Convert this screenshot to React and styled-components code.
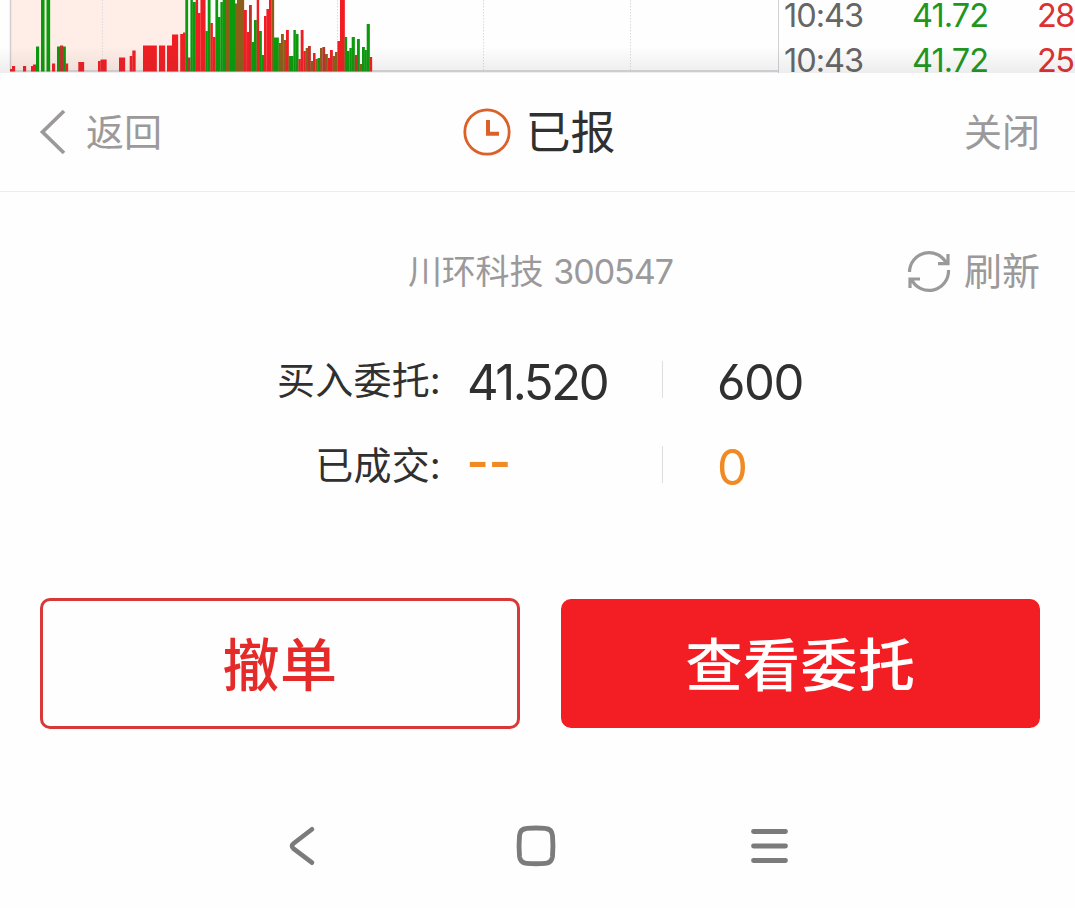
import React from "react";
import styled, { createGlobalStyle } from "styled-components";

const Global = createGlobalStyle`
  * { box-sizing: border-box; }
  body { margin: 0; background: #fefefe; }
`;

const Page = styled.main`
  width: 1075px;
  height: 908px;
  overflow: hidden;
  display: flex;
  flex-direction: column;
  background: #fefefe;
  color: #303030;
  font-family: "Inter", "Noto Sans CJK SC", sans-serif;
  font-weight: 400;
`;

const Market = styled.section`
  height: 73px;
  display: flex;
  position: relative;
  flex: none;
  &::after {
    content: "";
    position: absolute;
    inset: 47px 0 0 0;
    background: linear-gradient(rgba(70, 60, 75, 0), rgba(70, 60, 75, 0.09));
  }
`;

const Chart = styled.svg`
  display: block;
  flex: none;
`;

const Trades = styled.div`
  flex: 1;
  padding-left: 5px;
  display: grid;
  grid-template-rows: 32px 28px;
  row-gap: 15px;
`;

const Trade = styled.div`
  display: grid;
  grid-template-columns: 128px 125px 38px;
  align-items: center;
  font-size: 32.5px;
  line-height: 26px;
  white-space: nowrap;
`;

const Cell = styled.span`
  color: ${(p) => p.$color};
  letter-spacing: ${(p) => p.$spacing || 0}px;
`;

const Header = styled.header`
  height: 119px;
  flex: none;
  padding: 0 35px 0 39px;
  border-bottom: 1px solid #ececec;
  display: grid;
  grid-template-columns: 1fr auto 1fr;
  align-items: center;
`;

const Action = styled.button`
  border: 0;
  background: none;
  padding: 0;
  display: flex;
  align-items: center;
  gap: ${(p) => p.$gap || 0}px;
  justify-self: ${(p) => p.$side};
  font: 400 38px/50px "Noto Sans CJK SC", sans-serif;
  color: #9b999a;
`;

const Caption = styled.span`
  padding-bottom: 4px;
`;

const Title = styled.h1`
  margin: 0;
  display: flex;
  align-items: center;
  gap: 14px;
  font: 400 45px/60px "Noto Sans CJK SC", sans-serif;
`;

const StockRow = styled.div`
  height: 56px;
  margin-top: 51px;
  padding-right: 35px;
  display: grid;
  grid-template-columns: 408px 1fr auto;
  align-items: center;
  flex: none;
`;

const Stock = styled.div`
  grid-column: 2;
  display: flex;
  align-items: center;
  gap: 10px;
  font-size: 34px;
  line-height: 50px;
  color: #9b999a;
`;

const StockName = styled.span`
  padding-top: 2px;
  letter-spacing: -0.2px;
`;

const Code = styled.span`
  padding-top: 2px;
  letter-spacing: -1px;
`;

const Orders = styled.section`
  margin-top: 38px;
  flex: none;
`;

const Order = styled.div`
  height: 85px;
  display: grid;
  grid-template-columns: 441px 221px 55px 200px;
  align-items: center;
`;

const Label = styled.span`
  justify-self: end;
  font-size: 38px;
  line-height: 50px;
  letter-spacing: 0.2px;
`;

const Value = styled.span`
  font-size: 49px;
  line-height: 60px;
  padding-top: 7px;
  padding-left: ${(p) => p.$left || 0}px;
  color: ${(p) => (p.$accent ? "#ef8a24" : "#303030")};
  letter-spacing: ${(p) => p.$spacing || 0}px;
  font-feature-settings: "cv03";
`;

const Rule = styled.i`
  width: 1px;
  height: 37px;
  background: #dedede;
`;

const Dashes = styled(Value)`
  font-family: "Liberation Sans", sans-serif;
  font-size: 64px;
  padding: 0 0 9px 26px;
  letter-spacing: 1px;
`;

const Buttons = styled.div`
  display: grid;
  grid-template-columns: 480px 479px;
  gap: 41px;
  padding-left: 40px;
  margin-top: 91px;
  height: 131px;
  align-items: center;
  flex: none;
`;

const Button = styled.button`
  height: ${(p) => (p.$filled ? 129 : 131)}px;
  padding: 0 0 6px;
  border-radius: 10px;
  font: 500 57px/80px "Noto Sans CJK SC", sans-serif;
  letter-spacing: 0.5px;
  border: 3px solid ${(p) => (p.$filled ? "#f31e23" : "#d93838")};
  background: ${(p) => (p.$filled ? "#f31e23" : "#fefefe")};
  color: ${(p) => (p.$filled ? "#fff" : "#e52a2a")};
`;

const NavBar = styled.nav`
  display: flex;
  justify-content: space-between;
  align-items: center;
  height: 44px;
  width: 501px;
  margin: 95px 0 0 288px;
  flex: none;
`;

const R = "#f01e23";
const G = "#0a9a0b";
const B = "#8c5f18";
const D = "#bd3328";

// [left, right, top, colour]; every bar stands on the volume axis.
const bars = [
  [10, 12, 69, R], [12, 15, 66, R], [23, 26, 66, R], [31, 33, 66, R], [33, 36, 64.5, R],
  [36, 39, 46.5, G], [41, 44.4, 0, G], [46.5, 50, 0, G], [52, 55, 63.5, R],
  [57, 60, 46.5, G], [60, 63, 45.5, D], [63, 65.7, 46.5, G], [65.7, 68, 63.5, R],
  [78.3, 84, 62, R], [98, 100.5, 61, R], [100.5, 106.5, 59.5, R], [119, 125, 57.5, R],
  [129.7, 132.3, 56, R], [132.3, 135.5, 50.5, R], [143, 156.7, 45.5, R], [159, 165, 45.5, R],
  [167, 172, 45.5, R], [172, 178, 34.5, R], [180.2, 183, 34, R], [183, 185.5, 32.5, R],
  [185.3, 188, 0, G], [188, 190.4, 57.5, D], [190.4, 192.7, 0, G], [192.7, 195.7, 2, G],
  [195.7, 198, 0, R], [198, 200.4, 13, R], [200.4, 205.4, 0, R], [205.4, 207.7, 31, G],
  [207.7, 210.4, 0, G], [210.4, 212.7, 23, R], [212.7, 215.4, 37, R], [215.4, 218, 0, G],
  [218, 220.4, 17, G], [220.4, 222.7, 2, G], [222.7, 226, 0, G], [226, 230, 0, B],
  [230, 235, 0, G], [235, 237, 3.5, B], [237, 244, 0, B], [244, 246.7, 10, R],
  [246.7, 249, 32, R], [249, 251.7, 5, D], [251.7, 254, 42, G], [254, 256.7, 20, G],
  [256.7, 259, 0, R], [259, 261.7, 31, G], [261.7, 264, 55, G], [264, 266.4, 16, R],
  [266.4, 269, 9, R], [269, 271.4, 0, R], [271.4, 274, 0, B], [274, 278.7, 37.5, G],
  [278.7, 281, 43, B], [281, 283.7, 34, B], [283.7, 286, 40, B], [286, 288.7, 30, R],
  [288.7, 293.4, 56, G], [293.4, 295.7, 30, G], [295.7, 298.4, 34, G], [298.4, 300.7, 59, R],
  [300.7, 303.4, 30, R], [303.4, 305.7, 51, R], [305.7, 308, 48, B], [308, 310.7, 46, D],
  [310.7, 313, 61, B], [313, 315.4, 53, R], [315.4, 317.7, 59, B], [317.7, 320, 58, G],
  [320, 322.4, 48, B], [322.4, 325, 47, D], [325, 327.7, 54, B], [327.7, 330, 58, R],
  [330, 332.7, 50, R], [332.7, 335, 56, B], [335, 337.4, 52, B], [337.4, 340, 41, R],
  [340, 344.7, 0, R], [344.7, 347, 37, G], [347, 349.4, 51, G], [349.4, 351.7, 48, G],
  [351.7, 354.7, 37, G], [354.7, 357, 55, D], [357, 359.7, 39, G], [359.7, 362, 64, B],
  [362, 364.7, 47, G], [364.7, 366.7, 50, G], [366.7, 369.7, 24, G], [369.7, 372, 57, R],
];

const VolumeChart = () => (
  <Chart width="779" height="73" viewBox="0 0 779 73">
    <rect x="11" width="174" height="71" fill="#ffeee7" />
    <path d="M102.5 0V71M337.5 0V71M483.5 0V71M630.5 0V71" stroke="#dedadc" strokeDasharray="1.5 1.5" />
    <path d="M10.5 0V71" stroke="#d5cccd" strokeWidth="1.5" />
    <path d="M10 71H778" stroke="#cfcdcf" strokeWidth="1.5" />
    <path d="M778.5 0V73" stroke="#d2d0d4" />
    {bars.map(([x, r, y, fill]) => (
      <rect key={x} x={x} y={y} width={r - x + 0.15} height={71.5 - y} fill={fill} />
    ))}
  </Chart>
);

const BackIcon = () => (
  <svg width="28" height="46" viewBox="0 0 28 46" fill="none" stroke="#9b999a" strokeWidth="3.7">
    <path d="M25 2L3.5 23L25 44" />
  </svg>
);

const ClockIcon = () => (
  <svg width="48" height="48" viewBox="0 0 48 48" fill="none" stroke="#dc6128">
    <circle cx="24" cy="24" r="22.2" strokeWidth="2.8" />
    <path d="M25 12V25.8H36" strokeWidth="4" />
  </svg>
);

const RefreshIcon = () => (
  <svg width="44" height="44" viewBox="0 0 44 44" fill="none" stroke="#9b999a" strokeWidth="3.2">
    <path d="M2.5 23A19.5 19.5 0 0 1 39.5 14.5M41 5V14.7H31M41.5 21A19.5 19.5 0 0 1 4.5 30.5M3 39V30H13" />
  </svg>
);

const NavBack = () => (
  <svg width="34" height="40" viewBox="0 0 34 40" fill="none" stroke="#7b7b7b" strokeWidth="4.6" strokeLinecap="round">
    <path d="M24 3.3L5.5 17.5Q2.5 20 5.5 22.7L24 36.7" />
  </svg>
);

const NavHome = () => (
  <svg width="40" height="42" viewBox="0 0 38 40" fill="none" stroke="#7b7b7b" strokeWidth="4.6">
    <path d="M10 3.3Q19 2.4 28 3.3Q34 3.6 34.7 10Q35.6 20 34.7 30Q34 36 28 36.5Q19 37.3 10 36.5Q4 36 3.3 30Q2.4 20 3.3 10Q4 3.6 10 3.3Z" />
  </svg>
);

const NavMenu = () => (
  <svg width="40" height="40" viewBox="0 0 40 40" stroke="#7b7b7b" strokeWidth="4.8" strokeLinecap="round">
    <path d="M4.5 5.5H36.5M4.5 20H36.5M4.5 34.5H36.5" />
  </svg>
);

export default function App() {
  return (
    <>
      <Global />
      <Page>
        <Market>
          <VolumeChart />
          <Trades>
            {["28", "25"].map((volume) => (
              <Trade key={volume}>
                <Cell $color="#666" $spacing={-1}>10:43</Cell>
                <Cell $color="#1f971f" $spacing={-0.9}>41.72</Cell>
                <Cell $color="#dc3131" $spacing={-1.5}>{volume}</Cell>
              </Trade>
            ))}
          </Trades>
        </Market>
        <Header>
          <Action $side="start" $gap={19}><BackIcon /><Caption>返回</Caption></Action>
          <Title><ClockIcon /><Caption>已报</Caption></Title>
          <Action $side="end"><Caption>关闭</Caption></Action>
        </Header>
        <StockRow>
          <Stock><StockName>川环科技</StockName><Code>300547</Code></Stock>
          <Action $side="end" $gap={13}><RefreshIcon /><Caption>刷新</Caption></Action>
        </StockRow>
        <Orders>
          <Order>
            <Label>买入委托:</Label>
            <Value $left={26} $spacing={-2.4}>41.520</Value>
            <Rule />
            <Value $spacing={-1.4}>600</Value>
          </Order>
          <Order>
            <Label>已成交:</Label>
            <Dashes $accent>--</Dashes>
            <Rule />
            <Value $accent>0</Value>
          </Order>
        </Orders>
        <Buttons>
          <Button>撤单</Button>
          <Button $filled>查看委托</Button>
        </Buttons>
        <NavBar>
          <NavBack />
          <NavHome />
          <NavMenu />
        </NavBar>
      </Page>
    </>
  );
}
